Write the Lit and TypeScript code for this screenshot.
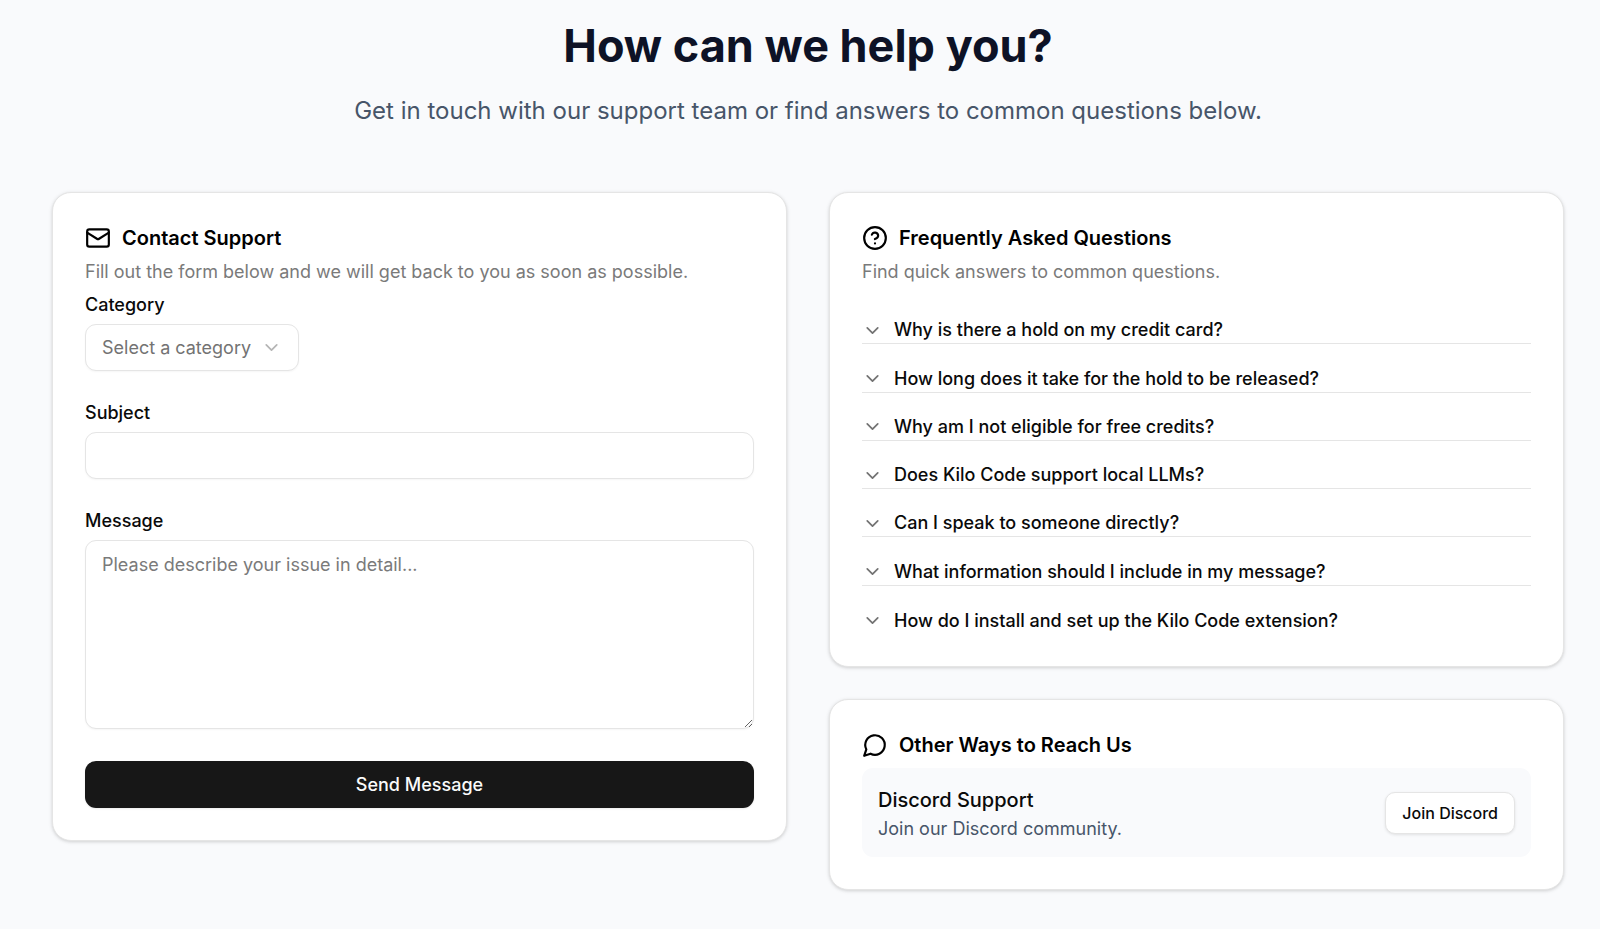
import { LitElement, html, css, svg } from "lit";
import { customElement } from "lit/decorators.js";

const chevron = svg`<path d="m6 9 6 6 6-6" />`;
const mail = svg`
  <rect x="2" y="4" width="20" height="16" rx="2" />
  <path d="m22 7-8.97 5.7a1.94 1.94 0 0 1-2.06 0L2 7" />`;
const help = svg`
  <circle cx="12" cy="12" r="10" />
  <path d="M9.09 9a3 3 0 0 1 5.83 1c0 2-3 3-3 3" />
  <path d="M12 17h.01" />`;
const bubble = svg`<path d="M7.9 20A9 9 0 1 0 4 16.1L2 22Z" />`;

const icon = (shape: unknown, cls: string) => html`
  <svg class=${cls} viewBox="0 0 24 24" fill="none" stroke="currentColor" stroke-width="2"
    stroke-linecap="round" stroke-linejoin="round" aria-hidden="true">${shape}</svg>`;

const questions = [
  "Why is there a hold on my credit card?",
  "How long does it take for the hold to be released?",
  "Why am I not eligible for free credits?",
  "Does Kilo Code support local LLMs?",
  "Can I speak to someone directly?",
  "What information should I include in my message?",
  "How do I install and set up the Kilo Code extension?",
];

@customElement("app-root")
export class AppRoot extends LitElement {
  static styles = css`
    :host {
      display: block;
      box-sizing: border-box;
      min-height: 100vh;
      padding: 20px 36px 38px 52px;
      background: #f9fafc;
      color: #0a0a0a;
      font-family: Inter, "Liberation Sans", sans-serif;
      font-size: 18px;
      line-height: 26px;
    }
    *, *::before, *::after { box-sizing: border-box; }
    h1, h2, h3, p, ul { margin: 0; padding: 0; }
    button, input, select, textarea { font: inherit; color: inherit; margin: 0; }

    .hero { text-align: center; margin-bottom: 62px; }
    .hero-title { font-size: 45px; line-height: 52px; font-weight: 700; color: #0d1226; }
    .hero-text { margin-top: 20px; font-size: 24px; line-height: 38px; color: #475569; }

    .columns {
      display: grid;
      grid-template-columns: repeat(auto-fit, minmax(min(100%, 480px), 1fr));
      gap: 32px 42px;
      align-items: start;
    }
    .stack { display: grid; gap: 32px; }
    .card {
      padding: 32px;
      background: #fff;
      border: 1px solid #e5e5e5;
      border-radius: 19px;
      box-shadow: 0 1px 4px rgb(0 0 0 / 0.1), 0 1px 3px rgb(0 0 0 / 0.08);
    }
    .card-title {
      display: flex;
      align-items: center;
      gap: 11px;
      font-size: 20px;
      line-height: 26px;
      font-weight: 600;
      color: #000;
    }
    .card-icon { width: 26px; height: 26px; flex: none; }
    .card-text { margin-top: 8px; color: #7a7a7a; }
    .card-body { margin-top: 10px; }

    .form { display: grid; gap: 32px; }
    .field { display: grid; gap: 9px; justify-items: start; }
    .label { line-height: 20px; font-weight: 500; }
    .control {
      width: 100%;
      height: 47px;
      padding: 0 16px;
      background: #fff;
      border: 1px solid #e5e5e5;
      border-radius: 11px;
      box-shadow: 0 1px 2px rgb(0 0 0 / 0.04);
      outline: none;
    }
    .control:focus-visible { border-color: #a3a3a3; }
    .select-wrap { display: grid; align-items: center; justify-items: end; }
    .select-wrap > * { grid-area: 1 / 1; }
    .select { appearance: none; width: auto; padding-right: 46px; color: #737373; }
    .select-icon { width: 21px; height: 21px; margin-right: 17px; color: #b5b5b5; pointer-events: none; }
    .area { display: block; height: 189px; padding: 11px 16px; resize: vertical; }
    .area::placeholder { color: #7a7a7a; opacity: 1; }
    .send {
      height: 47px;
      border: 0;
      border-radius: 11px;
      background: #171717;
      color: #fafafa;
      font-weight: 500;
      box-shadow: 0 1px 2px rgb(0 0 0 / 0.08);
      cursor: pointer;
    }

    .faq { display: grid; grid-auto-rows: 1fr; margin-top: 11px; min-height: 338px; list-style: none; }
    .faq-item { display: flex; align-items: flex-end; border-bottom: 1px solid #e5e5e5; }
    .faq-item:last-child { border-bottom: 0; }
    .question {
      display: flex;
      align-items: center;
      gap: 11px;
      width: 100%;
      padding: 0;
      border: 0;
      background: none;
      font-weight: 500;
      text-align: left;
      cursor: pointer;
    }
    .question-icon { width: 21px; height: 21px; flex: none; color: #737373; }

    .channel {
      display: flex;
      align-items: center;
      justify-content: space-between;
      gap: 16px;
      padding: 16px 16px 15px;
      border-radius: 11px;
      background: #f9fafc;
    }
    .channel-title { font-size: 20px; line-height: 32px; font-weight: 500; }
    .channel-text { color: #475569; }
    .join {
      padding: 7px 16px;
      border: 1px solid #e5e5e5;
      border-radius: 10px;
      background: #fff;
      font-size: 16px;
      line-height: 26px;
      font-weight: 500;
      color: inherit;
      text-decoration: none;
      white-space: nowrap;
      box-shadow: 0 1px 3px rgb(0 0 0 / 0.1);
    }
  `;

  render() {
    return html`
      <header class="hero">
        <h1 class="hero-title">How can we help you?</h1>
        <p class="hero-text">Get in touch with our support team or find answers to common questions below.</p>
      </header>
      <main class="columns">
        <section class="card">
          <h2 class="card-title">${icon(mail, "card-icon")}Contact Support</h2>
          <p class="card-text">Fill out the form below and we will get back to you as soon as possible.</p>
          <form class="form card-body" @submit=${(e: Event) => e.preventDefault()}>
            <div class="field">
              <label class="label" for="category">Category</label>
              <div class="select-wrap">
                <select class="control select" id="category">
                  <option value="">Select a category</option>
                </select>
                ${icon(chevron, "select-icon")}
              </div>
            </div>
            <div class="field">
              <label class="label" for="subject">Subject</label>
              <input class="control" id="subject" type="text" />
            </div>
            <div class="field">
              <label class="label" for="message">Message</label>
              <textarea class="control area" id="message" placeholder="Please describe your issue in detail..."></textarea>
            </div>
            <button class="send" type="submit">Send Message</button>
          </form>
        </section>
        <div class="stack">
          <section class="card">
            <h2 class="card-title">${icon(help, "card-icon")}Frequently Asked Questions</h2>
            <p class="card-text">Find quick answers to common questions.</p>
            <ul class="faq">
              ${questions.map((q) => html`
                <li class="faq-item">
                  <button class="question" type="button" aria-expanded="false">
                    ${icon(chevron, "question-icon")}<span>${q}</span>
                  </button>
                </li>`)}
            </ul>
          </section>
          <section class="card">
            <h2 class="card-title">${icon(bubble, "card-icon")}Other Ways to Reach Us</h2>
            <div class="channel card-body">
              <div>
                <h3 class="channel-title">Discord Support</h3>
                <p class="channel-text">Join our Discord community.</p>
              </div>
              <a class="join" href="#discord">Join Discord</a>
            </div>
          </section>
        </div>
      </main>
    `;
  }
}
